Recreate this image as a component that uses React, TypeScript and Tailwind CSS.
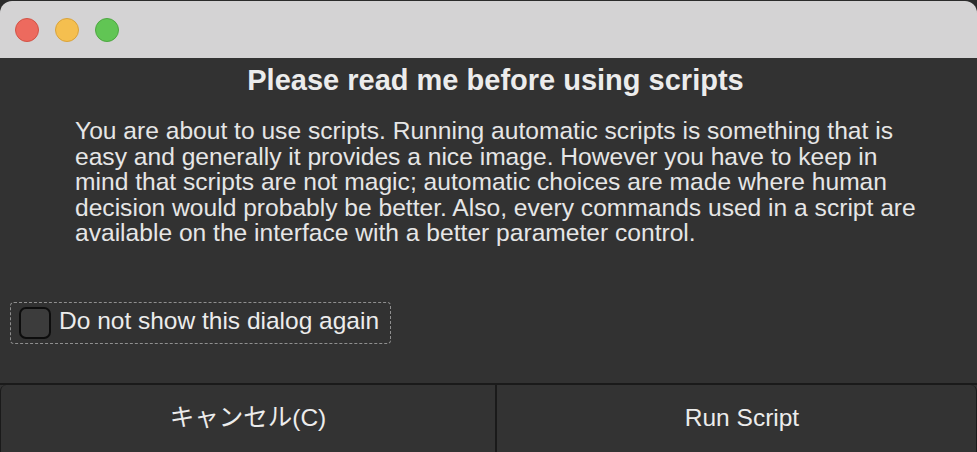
export default function App() {
  const font = { fontFamily: '"Liberation Sans", Arial, "Noto Sans CJK JP", sans-serif' };
  return (
    <div className="w-[977px] h-[452px] bg-[#2b2b2b] overflow-hidden" style={font}>
      <div className="w-full h-full flex flex-col">
        <div className="h-[57px] mt-[1px] bg-[#d4d3d4] rounded-t-[12px] flex items-center gap-[16px] pl-[15px] shrink-0">
          <div className="w-[24px] h-[24px] rounded-full bg-[#ed6a5e] border border-[#d25346]" />
          <div className="w-[24px] h-[24px] rounded-full bg-[#f5bf4f] border border-[#d9a33b]" />
          <div className="w-[24px] h-[24px] rounded-full bg-[#61c554] border border-[#4ea742]" />
        </div>
        <div className="flex-1 bg-[#323232] flex flex-col">
          <div className="text-center text-[#ececec] font-bold text-[29px] leading-[32px] mt-[6px] pl-[14px] whitespace-nowrap">
            Please read me before using scripts
          </div>
          <div className="mt-[22px] pl-[75px] text-[#e6e6e6] text-[24.6px] leading-[25.5px] whitespace-nowrap">
            <div>You are about to use scripts. Running automatic scripts is something that is</div>
            <div>easy and generally it provides a nice image. However you have to keep in</div>
            <div>mind that scripts are not magic; automatic choices are made where human</div>
            <div>decision would probably be better. Also, every commands used in a script are</div>
            <div>available on the interface with a better parameter control.</div>
          </div>
          <div className="mt-[56px] ml-[10px] w-[381px] h-[42px] border border-dashed border-[#8f8f8f] rounded-[4px] flex items-center pl-[8px] gap-[8px]">
            <div className="w-[32px] h-[32px] rounded-[7px] border-2 border-[#0d0d0d] bg-[#3c3c3c] shrink-0" />
            <span className="text-[#ececec] text-[24.5px] leading-[26px] mb-[3px] whitespace-nowrap">Do not show this dialog again</span>
          </div>
          <div className="mt-auto h-[69px] border-t-2 border-[#1a1a1a] flex">
            <div className="w-[497px] h-full bg-[#333333] rounded-tl-[6px] border-l border-[#1a1a1a] border-r-2 flex items-center justify-center text-[#ececec] text-[24.5px]">
              キャンセル(C)
            </div>
            <div className="flex-1 h-full bg-[#333333] rounded-tr-[6px] border-r border-[#1a1a1a] flex items-center justify-center pl-[11px] text-[#ececec] text-[24.5px]">
              Run Script
            </div>
          </div>
        </div>
      </div>
    </div>
  );
}
